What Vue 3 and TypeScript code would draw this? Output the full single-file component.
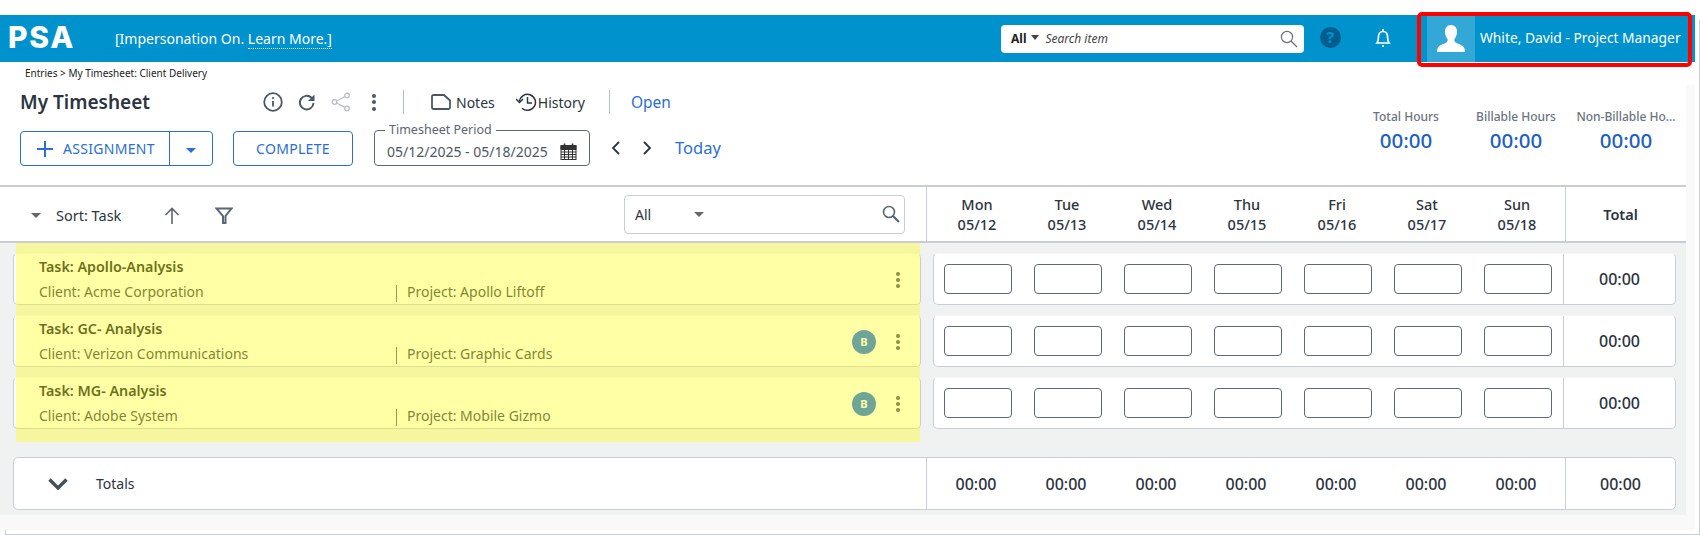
<template>
  <div class="page">
    <header class="nav">
      <span class="logo">PSA</span>
      <span class="imp">[Impersonation On. <span class="learn">Learn More.]</span></span>
      <div class="search">
        <b>All</b>
        <i class="caret small"></i>
        <em>Search item</em>
        <svg class="search-ico" width="18" height="18" viewBox="0 0 18 18" fill="none" stroke="#66707c" stroke-width="1.2">
          <circle cx="7" cy="7" r="5.6" />
          <path d="M11 11l6 6" />
        </svg>
      </div>
      <span class="help">?</span>
      <svg class="bell" width="18" height="20" viewBox="0 0 18 20" fill="none" stroke="#fff" stroke-width="1.7">
        <path d="M3 15c1.2-1.5 1.4-3 1.4-5.5C4.4 6 6 3.5 9 3.5s4.6 2.5 4.6 6c0 2.5.2 4 1.4 5.5z" />
        <path d="M9 1v2" />
        <circle cx="9" cy="18" r="1" fill="#fff" stroke="none" />
      </svg>
      <div class="user">
        <div class="avatar">
          <svg width="28" height="27" viewBox="0 0 28 27" fill="#fff">
            <path d="M14 0c4 0 6 3 6 6.5 0 3-1 5.5-2.5 7.5-.5 1.500 0 3 2 4 3 1.400 7 2.500 8 5.500.3 1.200.5 2.500.5 3.500H0c0-1 .2-2.300.5-3.500 1-3 5-4.100 8-5.500 2-1 2.500-2.500 2-4C9 12 8 9.500 8 6.500 8 3 10 0 14 0z" />
          </svg>
        </div>
        <span class="user-name">White, David - Project Manager</span>
      </div>
    </header>
    <div class="user-outline"></div>

    <main class="main">
      <section class="head">
        <div class="crumbs">Entries &gt; My Timesheet: Client Delivery</div>
        <div class="head-row">
          <div class="head-left">
            <div class="title-row">
              <h1>My Timesheet</h1>
              <div class="tools">
                <svg width="20" height="20" viewBox="0 0 20 20" fill="none" stroke="#4d5763" stroke-width="1.8">
                  <circle cx="10" cy="10" r="8.8" />
                  <path d="M10 9v5.5" />
                  <circle cx="10" cy="6" r="1.1" fill="#4d5763" stroke="none" />
                </svg>
                <svg width="18" height="18" viewBox="0 0 18 18" fill="none" stroke="#4d5763" stroke-width="2">
                  <path d="M15.5 10a6.8 6.8 0 1 1-2-5.2L15.5 7" />
                  <path d="M16.5 1.5v6.5h-6.500z" fill="#4d5763" stroke="none" />
                </svg>
                <svg width="20" height="20" viewBox="0 0 20 20" fill="none" stroke="#b9bfc6" stroke-width="1.3">
                  <circle cx="3.5" cy="10" r="2.3" />
                  <circle cx="16" cy="3.5" r="2.3" />
                  <circle cx="16" cy="16.5" r="2.3" />
                  <path d="M5.5 9l8.5-4.500M5.500 11l8.500 4.500" />
                </svg>
                <span class="kebab"><i></i><i></i><i></i></span>
              </div>
              <span class="vline"></span>
              <button class="link-btn notes">
                <svg width="20" height="16" viewBox="0 0 20 16" fill="none" stroke="#4d5763" stroke-width="1.8">
                  <path d="M1 2.5c0-.8.6-1.500 1.500-1.500H13l6 5.500v7c0 .8-.6 1.500-1.500 1.500h-15C1.600 15 1 14.300 1 13.500z" />
                </svg>
                Notes
              </button>
              <button class="link-btn history">
                <svg width="21" height="20" viewBox="0 0 21 20" fill="none" stroke="#2c3440" stroke-width="1.5">
                  <path d="M3.5 9.5a8 8 0 1 1 2.5 6.700" />
                  <path d="M0 7l3.5 3.500L7 7" />
                  <path d="M11.5 5v6h4.500" />
                </svg>
                History
              </button>
              <span class="vline second"></span>
              <a class="open">Open</a>
            </div>
            <div class="action-row">
              <div class="split">
                <button class="split-main">
                  <svg width="16" height="16" viewBox="0 0 16 16" stroke="#2b6fd0" stroke-width="2">
                    <path d="M8 0v16M0 8h16" />
                  </svg>
                  ASSIGNMENT
                </button>
                <button class="split-drop"><i class="caret blue"></i></button>
              </div>
              <button class="complete">COMPLETE</button>
              <fieldset class="period">
                <legend>Timesheet Period</legend>
                <span>05/12/2025 - 05/18/2025</span>
                <svg width="17" height="17" viewBox="0 0 17 17" fill="none" stroke="#333" stroke-width="1">
                  <rect x="1" y="2.5" width="15" height="14" fill="#fff" />
                  <path d="M1 3h15v3.5H1z" fill="#333" />
                  <path d="M1 9h15M1 11.5h15M1 14h15M4.5 6v10M8.5 6v10M12.5 6v10" />
                  <path d="M4.5 0.5v3M12.5 0.5v3" stroke-width="1.6" />
                </svg>
              </fieldset>
              <svg class="chev" width="10" height="14" viewBox="0 0 10 14" fill="none" stroke="#2c3440" stroke-width="1.8">
                <path d="M8 1L2 7l6 6" />
              </svg>
              <svg class="chev next" width="10" height="14" viewBox="0 0 10 14" fill="none" stroke="#2c3440" stroke-width="1.8">
                <path d="M2 1l6 6-6 6" />
              </svg>
              <a class="today">Today</a>
            </div>
          </div>
          <div class="stats">
            <div v-for="s in stats" :key="s" class="stat">
              <span class="stat-label">{{ s }}</span>
              <span class="stat-val">00:00</span>
            </div>
          </div>
        </div>
      </section>

      <section class="table-head">
        <div class="sort-cell">
          <i class="caret grey"></i>
          <span class="sort-label">Sort: Task</span>
          <svg class="up" width="16" height="17" viewBox="0 0 16 17" fill="none" stroke="#5c6774" stroke-width="1.6">
            <path d="M8 17V1.5M1.5 8L8 1.5 14.5 8" />
          </svg>
          <svg class="funnel" width="18" height="17" viewBox="0 0 18 17" fill="none" stroke="#5c6774" stroke-width="2">
            <path d="M1.5 1.5h15L10.5 9v7h-2.5V9z" />
          </svg>
          <div class="filter">
            <span>All</span>
            <i class="caret grey"></i>
            <svg width="18" height="18" viewBox="0 0 18 18" fill="none" stroke="#5c6774" stroke-width="1.6">
              <circle cx="7" cy="7" r="5.5" />
              <path d="M11 11l6 6" stroke-width="2.2" />
            </svg>
          </div>
        </div>
        <div class="days">
          <div v-for="d in days" :key="d.name" class="day">
            <span>{{ d.name }}</span>
            <span>{{ d.date }}</span>
          </div>
        </div>
        <div class="total-head">Total</div>
      </section>

      <section class="body">
        <div v-for="r in rows" :key="r.task" class="row">
          <div class="task-card">
            <div class="task-text">
              <div class="task-name">Task: {{ r.task }}</div>
              <div class="task-meta">
                <span class="client">Client: {{ r.client }}</span>
                <span class="project">Project: {{ r.project }}</span>
              </div>
            </div>
            <span v-if="r.billable" class="badge">B</span>
            <span class="kebab small"><i></i><i></i><i></i></span>
          </div>
          <div class="entry-card">
            <div class="inputs">
              <div v-for="d in days" :key="d.name" class="cell"><input type="text" /></div>
            </div>
            <div class="row-total">00:00</div>
          </div>
        </div>
        <div class="highlight"></div>

        <div class="totals">
          <div class="totals-label">
            <svg width="20" height="12" viewBox="0 0 20 12" fill="none" stroke="#46505c" stroke-width="3.4">
              <path d="M1.5 1.5L10 10l8.5-8.5" />
            </svg>
            <span>Totals</span>
          </div>
          <div class="totals-days">
            <span v-for="d in days" :key="d.name">00:00</span>
          </div>
          <div class="row-total">00:00</div>
        </div>
      </section>
      <div class="foot"></div>
    </main>
  </div>
</template>

<script setup lang="ts">
const stats: string[] = ["Total Hours", "Billable Hours", "Non-Billable Ho..."];

const days = [
  { name: "Mon", date: "05/12" },
  { name: "Tue", date: "05/13" },
  { name: "Wed", date: "05/14" },
  { name: "Thu", date: "05/15" },
  { name: "Fri", date: "05/16" },
  { name: "Sat", date: "05/17" },
  { name: "Sun", date: "05/18" },
];

const rows = [
  { task: "Apollo-Analysis", client: "Acme Corporation", project: "Apollo Liftoff", billable: false },
  { task: "GC- Analysis", client: "Verizon Communications", project: "Graphic Cards", billable: true },
  { task: "MG- Analysis", client: "Adobe System", project: "Mobile Gizmo", billable: true },
];
</script>

<style scoped>
.page {
  position: relative;
  width: 1700px;
  height: 535px;
  overflow: hidden;
  background: linear-gradient(#c9ced6, #c9ced6) 1699px 20px / 1px 100% no-repeat #fff;
  padding-top: 15px;
  box-sizing: border-box;
  font-family: "Noto Sans", "Open Sans", sans-serif;
  color: #2c3440;
}
button {
  font-family: inherit;
  background: none;
  border: 0;
  padding: 0;
}

/* top bar */
.nav {
  height: 47px;
  width: 1695px;
  background: #0092cc;
  display: flex;
  align-items: center;
  color: #fff;
  box-sizing: border-box;
  padding-left: 8px;
}
.nav > * {
  flex: none;
}
.logo {
  font-family: Inter, sans-serif;
  font-weight: 800;
  font-size: 30px;
  letter-spacing: 1.8px;
  line-height: 1;
  width: 107px;
  margin-top: -4px;
}
.imp {
  font-size: 14px;
  width: 886px;
  margin-top: -1px;
}
.learn {
  border-bottom: 1px dotted #fff;
}
.search {
  width: 303px;
  height: 28px;
  background: #fff;
  border-radius: 4px;
  display: flex;
  align-items: center;
  box-sizing: border-box;
  padding: 0 4px 0 10px;
  color: #222;
  font-size: 12px;
}
.search em {
  margin-left: 6px;
  color: #444;
  flex: 1;
}
.search-ico {
  margin-right: 2px;
}
.caret {
  display: inline-block;
  width: 0;
  height: 0;
  border-left: 5px solid transparent;
  border-right: 5px solid transparent;
  border-top: 5px solid #666;
}
.caret.small {
  margin-left: 5px;
  margin-top: -2px;
  border-top-color: #444;
  border-left-width: 4.5px;
  border-right-width: 4.5px;
}
.caret.blue {
  border-top-color: #2b6fd0;
}
.help {
  width: 21px;
  height: 21px;
  border-radius: 50%;
  background: #005e8f;
  color: #0092cc;
  font-weight: 800;
  font-size: 15px;
  line-height: 21px;
  text-align: center;
  margin-left: 16px;
  margin-top: -2px;
}
.bell {
  margin-left: 33px;
  margin-top: -2px;
}
.user {
  display: flex;
  align-items: center;
  margin-left: 35px;
  height: 47px;
}
.avatar {
  width: 48px;
  height: 46px;
  background: #33a8d6;
  display: flex;
  align-items: center;
  justify-content: center;
}
.user-name {
  font-size: 13.8px;
  white-space: nowrap;
  margin-left: 5px;
  margin-top: -2px;
}
.user-outline {
  position: absolute;
  left: 1417px;
  top: 12px;
  width: 275px;
  height: 55px;
  box-sizing: border-box;
  border: 4px solid #f00;
  border-radius: 5px;
}

/* page body */
.main {
  width: 1695px;
  background: linear-gradient(#fff 23px, #f9f9f9 23px);
}
.head {
  width: 1686px;
  height: 125px;
  box-sizing: border-box;
  background: #fff;
  padding: 0 0 0 25px;
  border-bottom: 2px solid #c9ced6;
}
.crumbs {
  font-size: 10px;
  line-height: 13px;
  padding-top: 5px;
  color: #222;
}
.head-row {
  display: flex;
  justify-content: space-between;
}
.head-left {
  margin-left: -5px;
}
.title-row {
  display: flex;
  align-items: center;
  height: 32px;
  margin-top: 6px;
}
h1 {
  margin: 0;
  width: 243px;
  font-size: 19px;
  font-weight: 600;
  color: #2c3440;
  white-space: nowrap;
}
.tools {
  display: flex;
  align-items: center;
  gap: 15px;
  width: 140px;
}
.kebab {
  display: inline-flex;
  flex-direction: column;
  gap: 2.5px;
  margin-left: 6px;
}
.kebab i {
  width: 4px;
  height: 4px;
  border-radius: 50%;
  background: #4d5763;
}
.kebab.small {
  margin-left: 0;
  gap: 2px;
}
.vline {
  width: 1px;
  height: 24px;
  background: #b6bcc4;
}
.link-btn {
  display: flex;
  align-items: center;
  color: #2c3440;
  font-size: 14px;
}
.notes {
  margin-left: 27px;
  gap: 5px;
}
.history {
  margin-left: 21px;
  gap: 1px;
}
.vline.second {
  margin-left: 24px;
}
.open {
  margin-left: 21px;
  font-size: 15.5px;
  color: #2b6fd0;
}
.action-row {
  display: flex;
  align-items: center;
  margin-top: 12px;
  height: 36px;
}
.split {
  display: flex;
  width: 193px;
  height: 35px;
  box-sizing: border-box;
  border: 1px solid #2b6fd0;
  border-radius: 4px;
}
.split-main {
  width: 149px;
  display: flex;
  align-items: center;
  gap: 10px;
  padding: 1px 0 0 16px;
  color: #2b6fd0;
  font-size: 14px;
  letter-spacing: 0.3px;
  border-right: 1px solid #2b6fd0;
}
.split-drop {
  flex: 1;
}
.complete {
  width: 120px;
  height: 35px;
  margin-left: 20px;
  padding-top: 1px;
  box-sizing: border-box;
  border: 1px solid #2b6fd0;
  border-radius: 4px;
  color: #2b6fd0;
  font-size: 14px;
  letter-spacing: 0.3px;
}
.period {
  margin: -7px 0 0 21px;
  padding: 0 12px;
  width: 216px;
  height: 43px;
  box-sizing: border-box;
  border: 1px solid #5f6875;
  border-radius: 4px;
  display: flex;
  align-items: center;
  justify-content: space-between;
  color: #4d5763;
  font-size: 14px;
  white-space: nowrap;
}
.period legend {
  font-size: 12.5px;
  line-height: 14px;
  padding: 0 4px;
  margin-left: -2px;
  color: #5a6472;
}
.period svg {
  flex: none;
}
.chev {
  margin-left: 21px;
}
.chev.next {
  margin-left: 21px;
}
.today {
  margin-left: 23px;
  margin-top: -2px;
  font-size: 16.5px;
  color: #2b6fd0;
}
.stats {
  display: grid;
  grid-template-columns: repeat(3, 110px);
  margin: 28px 5px 0 0;
}
.stat {
  display: flex;
  flex-direction: column;
  align-items: center;
}
.stat-label {
  font-size: 12px;
  font-weight: 500;
  color: #6b7480;
  line-height: 17px;
  white-space: nowrap;
}
.stat-val {
  font-size: 20.5px;
  font-weight: 500;
  line-height: 30px;
  color: #1e5fc0;
}

/* table header */
.table-head {
  display: flex;
  width: 1686px;
  height: 54px;
  background: #fff;
  border-bottom: 2px solid #c9ced6;
}
.sort-cell {
  width: 927px;
  box-sizing: border-box;
  border-right: 1px solid #c9ced6;
  display: flex;
  align-items: center;
  padding: 2px 0 0 31px;
  font-size: 14.5px;
}
.sort-label {
  margin-left: 15px;
  width: 90px;
}
.up {
  margin-left: 18px;
}
.funnel {
  margin-left: 35px;
}
.filter {
  margin-left: 391px;
  width: 281px;
  height: 39px;
  box-sizing: border-box;
  border: 1px solid #c9ced6;
  border-radius: 4px;
  display: flex;
  align-items: center;
  padding: 0 4px 0 10px;
  margin-top: -2px;
  font-size: 14px;
}
.filter span {
  width: 59px;
}
.filter .caret {
  flex: none;
  margin-right: auto;
}
.days {
  display: grid;
  grid-template-columns: repeat(7, 90px);
  width: 638px;
  padding-left: 5px;
  box-sizing: border-box;
}
.day {
  display: flex;
  flex-direction: column;
  align-items: center;
  justify-content: center;
  font-size: 14.5px;
  font-weight: 500;
  line-height: 20px;
}
.total-head {
  flex: 1;
  border-left: 1px solid #c9ced6;
  display: flex;
  align-items: center;
  justify-content: center;
  font-size: 14.5px;
  font-weight: 600;
  padding-right: 11px;
}

/* rows */
.body {
  position: relative;
  width: 1686px;
  height: 272px;
  box-sizing: border-box;
  background: #f0f2f2;
  padding: 10px 10px 0 13px;
}
.row {
  display: flex;
  height: 52px;
  margin-bottom: 10px;
}
.task-card,
.entry-card,
.totals {
  background: #fff;
  border: 1px solid #c9ced6;
  border-radius: 5px;
  box-sizing: border-box;
}
.task-card,
.entry-card {
  border-top-color: #f4f5f6;
}
.task-card {
  width: 908px;
  display: flex;
  align-items: center;
  padding: 1px 20px 0 25px;
}
.task-text {
  flex: 1;
}
.task-name {
  font-size: 14.3px;
  font-weight: 600;
  line-height: 19px;
  margin-bottom: 6px;
  color: #1c2430;
}
.task-meta {
  display: flex;
  font-size: 14px;
  line-height: 20px;
  color: #3c4654;
}
.client {
  width: 357px;
}
.project {
  border-left: 1px solid #5c6774;
  padding-left: 10px;
  line-height: 14px;
  margin-top: 3px;
}
.badge {
  width: 24px;
  height: 24px;
  border-radius: 50%;
  background: #2275e8;
  color: #fff;
  font-size: 11px;
  font-weight: 700;
  line-height: 24px;
  text-align: center;
  margin-right: 20px;
}
.entry-card {
  margin-left: 12px;
  width: 743px;
  display: flex;
}
.inputs {
  display: grid;
  grid-template-columns: repeat(7, 90px);
  width: 630px;
  margin-left: -1px;
  align-items: center;
}
.cell {
  display: flex;
  justify-content: center;
}
.cell input {
  width: 68px;
  height: 30px;
  box-sizing: border-box;
  border: 1px solid #5f6875;
  border-radius: 4px;
  background: #fff;
  margin: 0;
  padding: 0;
}
.row-total {
  flex: 1;
  border-left: 1px solid #c9ced6;
  display: flex;
  align-items: center;
  justify-content: center;
  font-size: 16px;
  font-weight: 500;
}
.highlight {
  position: absolute;
  left: 16px;
  top: 0;
  width: 904px;
  height: 199px;
  background: rgba(255, 255, 0, 0.35);
  pointer-events: none;
}
.totals {
  display: flex;
  height: 53px;
  width: 1663px;
  margin-top: 28px;
}
.totals-label {
  width: 913px;
  box-sizing: border-box;
  border-right: 1px solid #c9ced6;
  display: flex;
  align-items: center;
  padding-left: 34px;
  font-size: 14px;
}
.totals-label span {
  margin-left: 28px;
}
.totals-days {
  display: grid;
  grid-template-columns: repeat(7, 90px);
  width: 638px;
  box-sizing: border-box;
  padding-left: 4px;
  align-items: center;
  justify-items: center;
  font-size: 16px;
  font-weight: 500;
}
.foot {
  height: 5px;
  margin: 15px 0 0 5px;
  width: 1694px;
  box-sizing: border-box;
  background: #fff;
  border-bottom: 1px solid #c9ced6;
  border-left: 1px solid #c9ced6;
}
</style>
